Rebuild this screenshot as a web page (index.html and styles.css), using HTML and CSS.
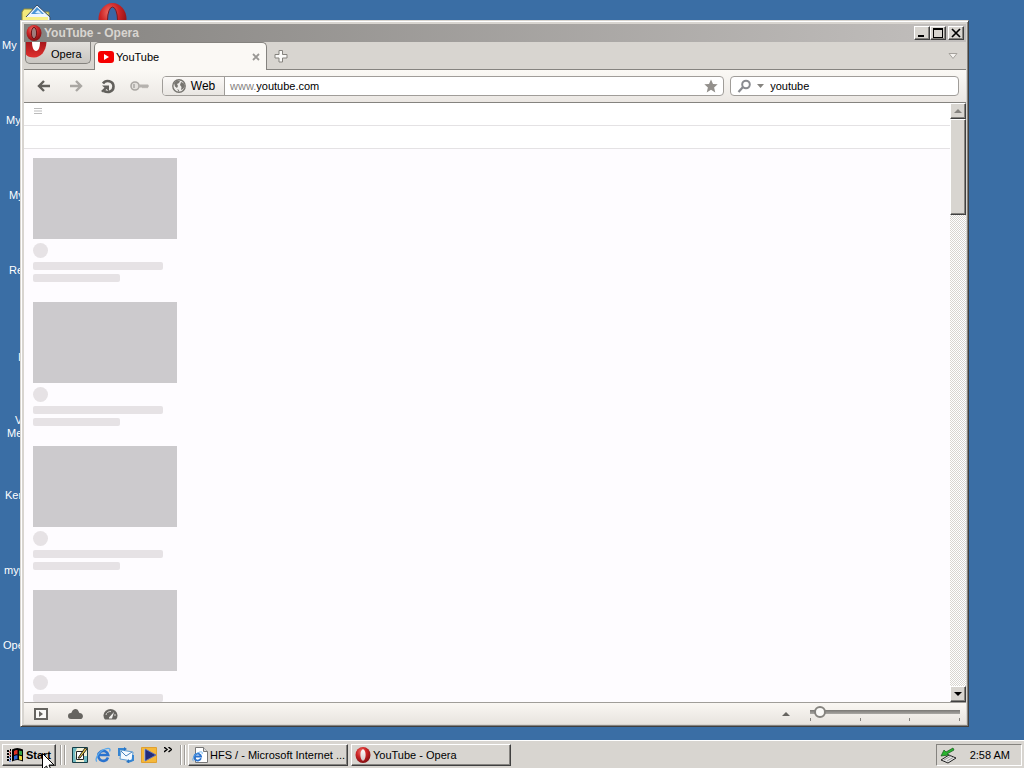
FILE: index.html
```html
<!DOCTYPE html>
<html lang="en">
<head>
<meta charset="utf-8">
<title>YouTube - Opera</title>
<link rel="stylesheet" href="styles.css">
</head>
<body>
<svg class="defs" width="0" height="0" aria-hidden="true">
  <defs>
    <radialGradient id="red" cx="40%" cy="30%" r="75%"><stop offset="0" stop-color="#f07068"/><stop offset=".45" stop-color="#cc2526"/><stop offset="1" stop-color="#7d0c10"/></radialGradient>
    <linearGradient id="inner" x1="0" y1="0" x2="0" y2="1"><stop offset="0" stop-color="#fff"/><stop offset="1" stop-color="#d5c8c8"/></linearGradient>
    <linearGradient id="ribbon" x1="0" y1="0" x2="0" y2="1"><stop offset="0" stop-color="#a8181c"/><stop offset="1" stop-color="#e0302e"/></linearGradient>
  </defs>
  <symbol id="opera" viewBox="0 0 16 16"><ellipse cx="8" cy="8" rx="7.5" ry="8" fill="url(#red)"/><ellipse cx="8" cy="8" rx="2.6" ry="5.8" fill="url(#inner)"/></symbol>
  <symbol id="opera-dim" viewBox="0 0 16 16"><ellipse cx="8" cy="8" rx="7.5" ry="8" fill="url(#red)"/><ellipse cx="8" cy="8" rx="2.6" ry="5.6" fill="#a07c7c" stroke="#6d1416"/></symbol>
  <symbol id="ie" viewBox="0 0 16 16"><path d="M13 10.5A5 5 0 1 1 13.2 8H4.5" fill="none" stroke="#2a73cf" stroke-width="2.6"/><path d="M2 14.5C-1 13 4 4 10 2c4-1.500 6-.5 4.500 2.500" fill="none" stroke="#5aa8ec" stroke-width="1.300"/></symbol>
</svg>

<main class="desktop">
  <span class="label my-docs">My</span>
  <span class="label my-computer">My</span>
  <span class="label my-network">My</span>
  <span class="label recycle">Re</span>
  <span class="label internet">I</span>
  <span class="label media">V<br>Me</span>
  <span class="label kernel">Ker</span>
  <span class="label myp">myp</span>
  <span class="label opera-label">Ope</span>
  <svg class="shortcut docs-icon" width="32" height="32" viewBox="0 0 32 32"><path d="M1 8l2-3h8l3 3h14v20H1z" fill="#f3ea7c" stroke="#8f8b3c"/><path d="M5 13L16 1l13 12v6H5z" fill="#eef6ff" stroke="#334a66"/><path d="M10 10l6-7 7 7z" fill="#4a94d6"/><path d="M14 9l3-3 4 4z" fill="#d9efff"/><path d="M2 13h25v15H2z" fill="#f7ef85"/></svg>
  <svg class="shortcut opera-icon" width="29" height="32" viewBox="0 0 29 32"><ellipse cx="14.500" cy="16" rx="14" ry="16" fill="url(#red)"/><ellipse cx="14.500" cy="17" rx="5" ry="13" fill="#3b67a4" stroke="#80191e"/></svg>

  <section class="window" aria-label="YouTube - Opera">
    <header class="titlebar">
      <svg width="16" height="16"><use href="#opera-dim"/></svg>
      <h1>YouTube - Opera</h1>
      <div class="controls">
        <button class="raised" aria-label="Minimize"><svg width="12" height="10"><path d="M2 7h6v2H2z"/></svg></button>
        <button class="raised" aria-label="Maximize"><svg width="12" height="10"><path d="M1 0h10v10H1zM2 2v7h8V2z" fill-rule="evenodd"/></svg></button>
        <button class="raised close" aria-label="Close"><svg width="12" height="10"><path d="M2 1l8 8M10 1L2 9" stroke="#000" stroke-width="1.700"/></svg></button>
      </div>
    </header>

    <nav class="tabs">
      <button class="menu"><svg width="21" height="17" viewBox="0 0 21 17"><path d="M0 0h20.500C20 9 15 15.500 8 15.500c-4 0-7-1-8-3z" fill="url(#ribbon)"/><path d="M6 0h8c0 5-1.500 9-4 9S6 5 6 0z" fill="#fff"/></svg>Opera</button>
      <div class="tab">
        <svg width="16" height="12"><rect width="16" height="12" rx="3" fill="#f60000"/><path d="M6 3l5 3-5 3z" fill="#fff"/></svg>
        <span class="tab-title">YouTube</span>
        <button class="plain" aria-label="Close tab"><svg width="8" height="8"><path d="M1 1l6 6M7 1L1 7" stroke="#9a9895" stroke-width="1.800"/></svg></button>
      </div>
      <button class="plain add" aria-label="New tab"><svg width="14" height="14"><path d="M5 1.500h3.500v4H13V9H8.500v4H5V9H1V5.500h4z" fill="#fbfaf8" stroke="#85837e"/></svg></button>
      <button class="plain closed-tabs" aria-label="Closed tabs"><svg width="10" height="7"><path d="M1 .5h8L5 5.500z" fill="#f4f2ef" stroke="#a5a29d"/></svg></button>
    </nav>

    <div class="toolbar">
      <button class="plain nav" aria-label="Back"><svg width="16" height="14"><path d="M14 7H3M8 2L3 7l5 5" fill="none" stroke="#62605c" stroke-width="2.400"/></svg></button>
      <button class="plain nav" aria-label="Forward"><svg width="16" height="14"><path d="M2 7h11M8 2l5 5-5 5" fill="none" stroke="#aaa7a3" stroke-width="2.400"/></svg></button>
      <button class="plain nav" aria-label="Reload"><svg width="16" height="15"><path d="M3 4.500C6 0 13.500 2 13.500 7.500S8 14 4 12" fill="none" stroke="#62605c" stroke-width="2.600"/><path d="M2 6.500h7v6L6.500 10 3 13.500 1 12l3.500-3.300z" fill="#62605c"/></svg></button>
      <button class="plain nav" aria-label="Password"><svg width="20" height="12"><circle cx="5" cy="6" r="4" fill="#e4e1dd" stroke="#aaa7a3" stroke-width="1.600"/><path d="M4 4v4" stroke="#aaa7a3" stroke-width="1.500"/><path d="M8 4.500h10l1 1.500-1 1.500-1 1-1-1-1 1-1-1-1 1-1-1H8z" fill="#b5b2ae"/></svg></button>
      <div class="address">
        <button class="web"><svg width="14" height="14"><circle cx="7" cy="7" r="6.200" fill="#eeece9" stroke="#777570" stroke-width="1.400"/><path d="M2 4l3-2.500 3 .5-1 2-2 1 1 2-1 2-2-1.500zM9 3l2.500 1L13 7l-2 3-2 1 .5-3L8 6zM5 10l2 1v2z" fill="#777570"/></svg>Web</button>
        <label class="prefix" for="url">www.</label>
        <input id="url" type="text" value="youtube.com" aria-label="Address">
        <button class="plain star" aria-label="Bookmark"><svg width="14" height="14"><path d="M7 .5l2 4.500 4.700.3-3.600 3.200 1.200 4.900L7 10.800l-4.300 2.600 1.200-4.900L.3 5.300 5 5z" fill="#93908c"/></svg></button>
      </div>
      <div class="search">
        <button class="plain" aria-label="Search engine"><svg width="28" height="14"><circle cx="9" cy="5.500" r="3.800" fill="#fff" stroke="#898b90" stroke-width="2"/><path d="M6 8l-4.500 5" stroke="#898b90" stroke-width="2.200"/><path d="M20 5h7l-3.500 4z" fill="#85837f"/></svg></button>
        <input type="text" value="youtube" aria-label="Search">
      </div>
    </div>

    <div class="view">
      <div class="page">
        <div class="masthead"><button class="plain" aria-label="Guide"><svg width="8" height="6"><path d="M0 .5h8M0 3h8M0 5.500h8" stroke="#bbb"/></svg></button></div>
        <div class="chips"></div>
        <div class="feed">
          <article><div class="thumb"></div><div class="avatar"></div><div class="line"></div><div class="line short"></div></article>
          <article><div class="thumb"></div><div class="avatar"></div><div class="line"></div><div class="line short"></div></article>
          <article><div class="thumb"></div><div class="avatar"></div><div class="line"></div><div class="line short"></div></article>
          <article><div class="thumb"></div><div class="avatar"></div><div class="line"></div><div class="line short"></div></article>
        </div>
      </div>
      <div class="scrollbar">
        <button class="raised" aria-label="Scroll up"><svg width="8" height="4"><path d="M0 4l4-4 4 4z" fill="#85837f"/></svg></button>
        <div class="thumb-bar raised"></div>
        <button class="raised down" aria-label="Scroll down"><svg width="8" height="4"><path d="M0 0h8L4 4z"/></svg></button>
      </div>
    </div>

    <footer class="status">
      <button class="plain" aria-label="Panels"><svg width="14" height="12"><rect x="1" y="1" width="12" height="10" fill="#faf9f7" stroke="#666460" stroke-width="2"/><path d="M5 3l4 3-4 3z" fill="#666460"/></svg></button>
      <button class="plain" aria-label="Sync"><svg width="15" height="12"><path d="M3 11a3 3 0 0 1 0-6c1 0 1-4 4.500-4 3 0 3 3 4 4C16 5 16 11 12 11z" fill="#666460"/></svg></button>
      <button class="plain" aria-label="Turbo"><svg width="15" height="12"><path d="M2 11.500A7 6.500 0 1 1 13 11.500z" fill="#666460"/><path d="M3 7a4.500 4 0 0 1 5-3.500M12 6v2" stroke="#d8d5d1" fill="none"/><path d="M6 9.500L11 4 9 10.500H6z" fill="#f2f0ed"/></svg></button>
      <button class="plain view-menu" aria-label="View"><svg width="8" height="4"><path d="M0 4l4-4 4 4z" fill="#666460"/></svg></button>
      <div class="zoom"><input type="range" min="0" max="100" value="3" aria-label="Zoom"><div class="ticks"><i></i><i></i><i></i><i></i></div></div>
    </footer>
  </section>
</main>

<footer class="taskbar">
  <button class="raised start"><svg width="17" height="15" viewBox="0 0 17 15"><path d="M5 1.500q5-3 11 0v12q-6-3-11 0z" fill="#000"/><path d="M7 3q2-1.500 3.500-1v4.500Q9 6 7 7z" fill="#e03126"/><path d="M12 2.500l3 .7v4l-3-.7z" fill="#35a347"/><path d="M7 8q2-1 3.500-.7v4Q9 11 7 12z" fill="#3166d5"/><path d="M12 7.500l3 .7v4l-3-.7z" fill="#efd436"/><path d="M0 3h2M3 2h1M0 6h2M3 5h1M0 9h2M3 8h1M0 12h2M3 11h1" stroke="#000" stroke-width="2"/><path d="M2 4h2M2 7h2" stroke="#d83428"/><path d="M2 10h2M2 13h2" stroke="#3166d5"/></svg>Start</button>
  <span class="grip"></span>
  <nav class="quick">
    <button class="plain" aria-label="Show desktop"><svg width="16" height="16"><path d="M.5.500h15v15H.5z" fill="#f4f1d8" stroke="#153d45"/><path d="M1 1h4l-2 5 1 9H1zM12 9h3v6h-3z" fill="#6fb9c2"/><path d="M4.500 4.500h7v8h-7z" fill="#fff" stroke="#222"/><path d="M6 11l7-10 2 1-7 9z" fill="#e9ca48" stroke="#222"/></svg></button>
    <button class="plain" aria-label="Internet Explorer"><svg width="16" height="16"><use href="#ie"/></svg></button>
    <button class="plain" aria-label="Outlook Express"><svg width="16" height="16"><path d="M3 3l12 2-1 9-12-2z" fill="#f4faff" stroke="#5c9bd3"/><path d="M3 4l5 5 6-4" fill="none" stroke="#4a83bd"/><path d="M1 9V2h5M15 8v5l-5 2" fill="none" stroke="#3685d2" stroke-width="2"/><path d="M6 0l3 2-3 2zM11 12v4l-3-1z" fill="#2674c5"/></svg></button>
    <button class="plain" aria-label="Media Player"><svg width="16" height="16"><path d="M.5.500h15v15H.5z" fill="#f5b83a" stroke="#e0a030"/><path d="M3 2h2v12H3z" fill="#fff0b8"/><path d="M4 2l11 6-11 6z" fill="#222c7c" stroke="#6272b4"/></svg></button>
    <button class="plain more" aria-label="More"><svg width="8" height="6"><path d="M0 0l3 2.500L0 5M4.500 0l3 2.500-3 2.500" fill="none" stroke="#000" stroke-width="1.400"/></svg></button>
  </nav>
  <span class="grip"></span>
  <button class="raised task"><svg width="16" height="16"><path d="M3.500.5h8l4 4v11h-12z" fill="#fff" stroke="#777"/><path d="M11.500.5v4h4" fill="#ddd" stroke="#777"/><use href="#ie" y="4" width="11" height="11"/></svg><span>HFS / - Microsoft Internet ...</span></button>
  <button class="raised task"><svg width="16" height="16"><use href="#opera"/></svg><span>YouTube - Opera</span></button>
  <div class="tray"><svg width="17" height="17"><path d="M1 13l8-5 7 3-8 5z" fill="#e4e4e4" stroke="#222"/><path d="M4 13l7-4M7 14l7-4" stroke="#999"/><path d="M13 1L6 5 4 3 1 9l8-1-2-1 7-4z" fill="#28b52f" stroke="#105818" stroke-width=".7"/></svg><time>2:58 AM</time></div>
</footer>
<svg class="cursor" width="12" height="20" aria-hidden="true"><path d="M.5.500v16l4-3.500 2.500 6 2.500-1L7 12h5z" fill="#fff" stroke="#000"/></svg>
</body>
</html>
```
FILE: styles.css
```css
* { box-sizing: border-box; }

body {
  margin: 0;
  height: 100vh;
  display: flex;
  flex-direction: column;
  overflow: hidden;
  background: #3a6ea5;
  color: #000;
  font: 11px/14px "Liberation Sans", Arial, sans-serif;
}

button, input { font: inherit; color: inherit; margin: 0; }
button { display: flex; align-items: center; justify-content: center; padding: 0; }
svg { display: block; flex: none; }
.defs, .cursor { position: absolute; }
.cursor { left: 42px; bottom: -5px; }

.plain { border: 0; background: none; }
.raised {
  border: 1px solid;
  border-color: #fff #404040 #404040 #fff;
  box-shadow: inset -1px -1px #85837f;
  background: #d8d5d0;
}

/* Desktop */
.desktop { position: relative; flex: 1; min-height: 0; }
.label, .shortcut { position: absolute; }
.label { color: #fff; line-height: 13px; }
.my-docs { left: 2px; top: 39px; }
.my-computer { left: 6px; top: 114px; }
.my-network { left: 9px; top: 189px; }
.recycle { left: 9px; top: 264px; }
.internet { left: 18px; top: 351px; }
.media { left: 7px; top: 414px; text-align: right; }
.kernel { left: 5px; top: 489px; }
.myp { left: 4px; top: 564px; }
.opera-label { left: 3px; top: 639px; }
.docs-icon { left: 21px; top: 4px; }
.opera-icon { left: 98px; top: 3px; }

/* Browser window */
.window {
  position: absolute;
  inset: 20px 55px 13px 20px;
  display: flex;
  flex-direction: column;
  padding: 3px 2px 2px 3px;
  border: 1px solid;
  border-color: #d8d5d0 #404040 #404040 #d8d5d0;
  background: #d8d5d0;
  box-shadow: inset 1px 1px #fff, inset -1px -1px #85837f;
}
.titlebar {
  display: flex;
  align-items: center;
  gap: 2px;
  height: 18px;
  flex: none;
  padding: 0 2px;
  background: linear-gradient(90deg, #858380, #c2bfbd);
}
.titlebar h1 { flex: 1; margin: 0; font-size: 12px; line-height: 16px; color: #d8d5d0; }
.controls { display: flex; }
.controls button { width: 16px; height: 14px; }
.controls .close { margin-left: 2px; }

.tabs {
  display: flex;
  align-items: flex-start;
  height: 28px;
  flex: none;
  padding-left: 1px;
  background: #d8d5d0;
  border-bottom: 1px solid #85837f;
}
.menu {
  width: 66px;
  height: 22px;
  justify-content: flex-start;
  align-items: flex-start;
  gap: 4px;
  border: 1px solid #85837f;
  border-top: 0;
  border-radius: 0 0 5px 5px;
  background: linear-gradient(#e2e0dc, #c9c6c1);
  line-height: 24px;
  overflow: hidden;
}
.tab {
  display: flex;
  align-items: center;
  gap: 2px;
  width: 173px;
  height: 28px;
  margin-left: 3px;
  padding: 0 6px 0 3px;
  border: 1px solid #85837f;
  border-bottom: 0;
  border-radius: 5px 5px 0 0;
  background: #fbf9f5;
}
.tab-title { flex: 1; }
.tab-title { text-align: left; }
.add { width: 28px; height: 28px; }
.closed-tabs { width: 26px; height: 28px; margin-left: auto; }

.toolbar {
  display: flex;
  align-items: center;
  height: 33px;
  flex: none;
  padding: 0 7px 0 4px;
  background: linear-gradient(#fbf9f5, #ebe7e3);
  border-bottom: 1px solid #85837f;
}
.nav { width: 32px; height: 24px; }
.address, .search {
  display: flex;
  height: 20px;
  border: 1px solid #a09d99;
  border-radius: 4px;
  background: #fff;
  overflow: hidden;
}
.address { flex: 563; min-width: 0; margin-left: 6px; margin-right: 6px; }
.search { flex: 228; min-width: 0; }
.web {
  width: 62px;
  gap: 5px;
  border: 0;
  border-right: 1px solid #a09d99;
  background: linear-gradient(#fbf9f7, #e9e6e2);
  font-size: 12px;
}
.prefix { padding-left: 5px; color: #85837f; line-height: 18px; }
.address input, .search input { flex: 1; min-width: 0; padding: 0; border: 0; background: none; outline: 0; }
.star { width: 24px; }
.search .plain { width: 39px; }

.view { display: flex; flex: 1; min-height: 0; background: #fefcff; }
.page { flex: 1; overflow: hidden; }
.masthead, .chips { background: #fff; border-bottom: 1px solid #e4e2e4; }
.masthead { height: 23px; padding: 5px 10px; }
.chips { height: 23px; }
.feed { display: grid; gap: 20px; padding: 9px; }
.thumb { width: 144px; height: 81px; background: #cccacd; }
.avatar { width: 15px; height: 15px; margin: 4px 0; border-radius: 50%; background: #e6e2e5; }
.line { width: 130px; height: 8px; border-radius: 2px; background: #e6e2e5; }
.short { width: 87px; margin-top: 4px; }

.scrollbar {
  display: flex;
  flex-direction: column;
  width: 16px;
  background: repeating-conic-gradient(#d8d5d0 0 25%, #fff 0 50%) 0 0 / 2px 2px;
}
.scrollbar button { height: 16px; flex: none; }
.scrollbar .down { margin-top: auto; }
.thumb-bar { height: 96px; }

.status {
  display: flex;
  align-items: center;
  height: 22px;
  flex: none;
  padding: 0 6px 0 10px;
  gap: 20px;
  border-top: 1px solid #a09d99;
  background: linear-gradient(#faf7f3, #e8e4df);
}
.view-menu { margin-left: auto; }
.zoom { width: 150px; height: 16px; }
.zoom input {
  display: block;
  width: 100%;
  height: 12px;
  appearance: none;
  background: linear-gradient(#797774, #aaa8a4) center / 100% 4px no-repeat;
}
.zoom input::-webkit-slider-thumb {
  appearance: none;
  width: 12px;
  height: 12px;
  border: 2px solid #85837f;
  border-radius: 50%;
  background: #faf9f7;
}
.ticks { display: flex; justify-content: space-between; }
.ticks i { width: 1px; height: 3px; background: #85837f; }

/* Taskbar */
.taskbar {
  display: flex;
  align-items: center;
  height: 28px;
  flex: none;
  padding: 3px 2px 1px;
  gap: 3px;
  background: #d8d5d0;
  box-shadow: inset 0 1px #fff;
}
.start { width: 54px; height: 22px; gap: 2px; font-weight: bold; }
.grip { width: 5px; height: 20px; margin-left: 1px; border: solid #a09d99; border-width: 0 1px; box-shadow: inset 1px 0 #fff, 1px 0 #fff; }
.quick { display: flex; align-items: center; gap: 7px; width: 108px; padding-left: 4px; }
.quick .more { width: 8px; height: 16px; align-items: flex-start; }
.task { width: 160px; height: 22px; padding: 0 3px; gap: 2px; justify-content: flex-start; white-space: nowrap; }
.tray {
  display: flex;
  align-items: center;
  justify-content: space-between;
  width: 86px;
  height: 22px;
  margin-left: auto;
  padding: 0 11px 0 3px;
  border: 1px solid;
  border-color: #85837f #fff #fff #85837f;
}
```
